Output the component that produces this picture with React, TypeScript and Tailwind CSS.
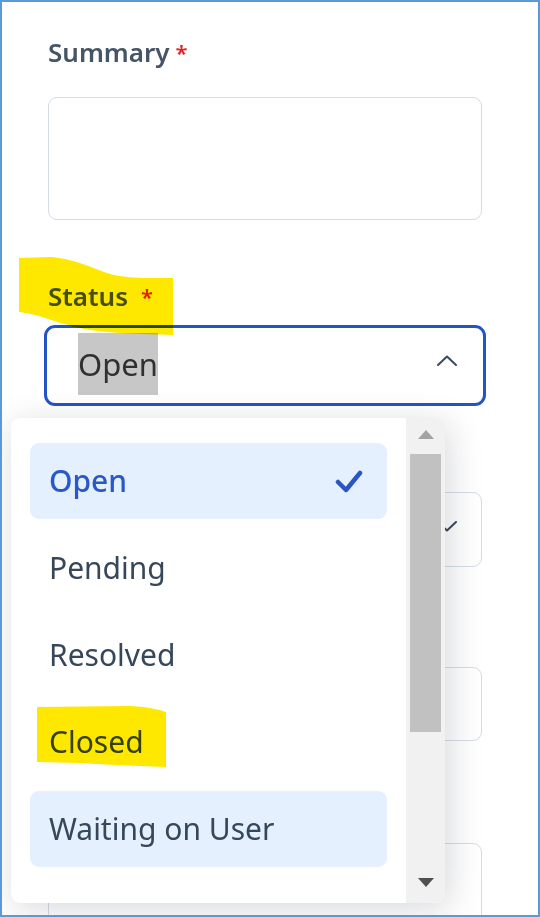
import React from 'react';

const options = ['Open', 'Pending', 'Resolved', 'Closed', 'Waiting on User'];

function Chevron({ up }: { up?: boolean }) {
  return (
    <svg width="20" height="11" viewBox="0 0 20 11" fill="none" className="shrink-0">
      <polyline
        points={up ? '1,10 10,1.5 19,10' : '1,1 10,9.5 19,1'}
        stroke="#3b4a5a"
        strokeWidth="2"
        strokeLinecap="round"
        strokeLinejoin="round"
      />
    </svg>
  );
}

function Check() {
  return (
    <svg width="28" height="26" viewBox="0 0 28 26" fill="none">
      <polyline
        points="3,14 11,22 25,5"
        stroke="#2a55c4"
        strokeWidth="4.5"
        strokeLinecap="round"
        strokeLinejoin="round"
      />
    </svg>
  );
}

function Label({ text }: { text: string }) {
  return (
    <div className="text-[26px] leading-[36px] font-semibold text-[#465566]">
      {text}
      <span className="text-[#e02424] text-[22px] align-top ml-[6px]">*</span>
    </div>
  );
}

export default function App() {
  return (
    <div className="relative w-[540px] h-[917px] overflow-hidden border-[2.5px] border-[#5b9bd5] bg-white font-['Noto_Sans',sans-serif]">
      {/* form */}
      <div className="flex flex-col pl-[46px] pr-[56px] pt-[32px]">
        <Label text="Summary" />
        <div className="mt-[27px] h-[123px] rounded-[9px] border-[1.5px] border-[#d5dce5]" />

        <div className="mt-[58px]">
          <div className="text-[26px] leading-[36px] font-semibold text-[#465566]">
            Status
            <span className="text-[#e02424] text-[22px] align-top ml-[13px]">*</span>
          </div>
        </div>

        {/* focused select */}
        <div className="mt-[11px] -mx-[4px] h-[81px] rounded-[11px] border-[3px] border-[#2453c5] flex items-center justify-between pl-[31px] pr-[26px]">
          <span className="bg-[#c7c7c7] text-[31px] leading-[62px] text-[#303030] -mt-[3px]">Open</span>
          <div className="-mt-[10px]">
            <Chevron up />
          </div>
        </div>

        {/* fields behind the dropdown */}
        <div className="mt-[86px] h-[75px] rounded-[9px] border-[1.5px] border-[#d5dce5] flex items-center justify-end pr-[24px]">
          <div className="-mt-[6px]">
            <Chevron />
          </div>
        </div>
        <div className="mt-[100px] h-[74px] rounded-[9px] border-[1.5px] border-[#d5dce5]" />
        <div className="mt-[102px] h-[90px] rounded-[9px] border-[1.5px] border-[#d5dce5]" />
      </div>

      {/* dropdown menu */}
      <div className="absolute left-[9px] top-[416px] w-[434px] h-[485px] rounded-[9px] bg-white overflow-hidden shadow-[4px_6px_34px_rgba(15,23,42,0.17)] flex">
        <div className="flex-1 flex flex-col gap-[11px] pt-[25px] px-[19px]">
          {options.map((o, i) => {
            const selected = i === 0;
            const hovered = i === 4;
            return (
              <div
                key={o}
                className={
                  'h-[76px] rounded-[9px] flex items-center justify-between pl-[19px] pr-[24px] text-[30px] ' +
                  (selected
                    ? 'bg-[#e4f0fd] text-[#2a58c6] font-medium'
                    : hovered
                    ? 'bg-[#e4f0fd] text-[#36475a]'
                    : 'text-[#36475a]')
                }
              >
                <span className="-mt-[1px]">{o}</span>
                {selected && <Check />}
              </div>
            );
          })}
        </div>

        {/* scrollbar */}
        <div className="w-[39px] bg-[#f1f1f1] flex flex-col items-center">
          <svg width="16" height="9" viewBox="0 0 16 9" className="mt-[12px]">
            <polygon points="0,9 8,0 16,9" fill="#a3a3a3" />
          </svg>
          <div className="mt-[15px] w-[31px] h-[278px] bg-[#c1c1c1]" />
          <div className="flex-1" />
          <svg width="16" height="9" viewBox="0 0 16 9" className="mb-[16px]">
            <polygon points="0,0 16,0 8,9" fill="#505050" />
          </svg>
        </div>
      </div>

      {/* highlighter marks */}
      <svg
        width="540"
        height="917"
        viewBox="0 0 540 917"
        className="absolute -left-[2.5px] -top-[2.5px] pointer-events-none mix-blend-multiply"
      >
        <path
          d="M19 258 L52 257 C80 260 95 270 114 275 C135 279 150 278 173 278 L173 335 C140 334 110 333 90 330 C60 325 40 314 19 312 Z"
          fill="#ffe800"
        />
        <path
          d="M37 707 L130 706 C150 707 160 710 166 712 L166 767 C130 766 100 764 80 763 L37 762 Z"
          fill="#ffe800"
        />
      </svg>
    </div>
  );
}
